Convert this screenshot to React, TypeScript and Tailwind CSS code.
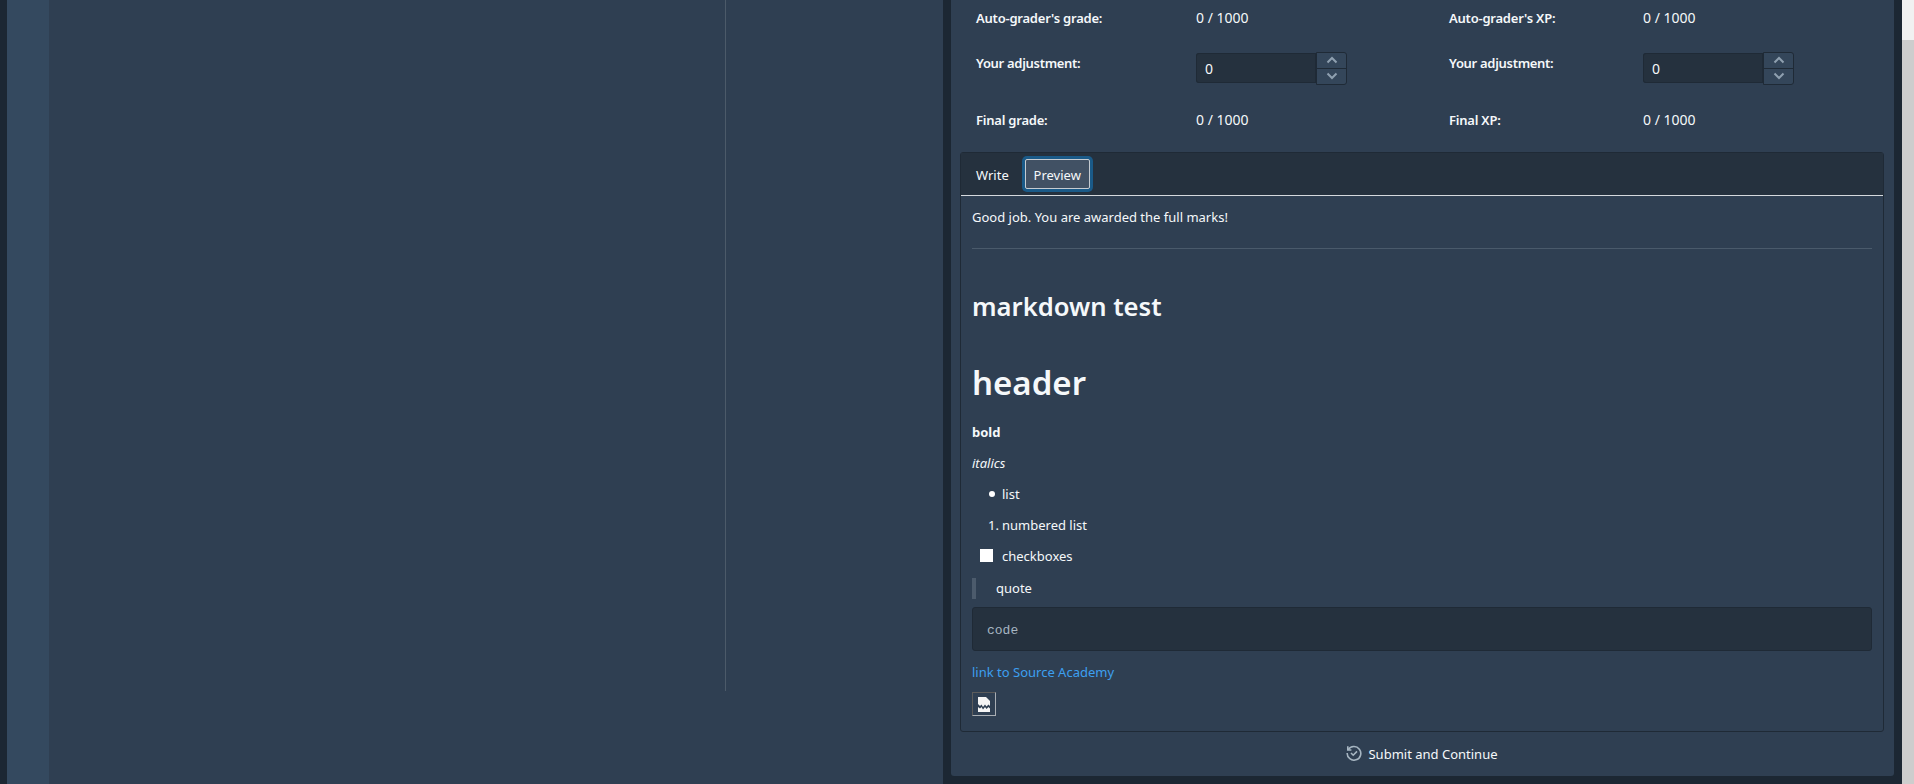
import React from "react";

const font = { fontFamily: '"Noto Sans", "Open Sans", sans-serif' };

function Spin() {
  return (
    <div className="flex h-[30px] items-center">
      <div className="flex h-[30px] w-[120px] items-center rounded-l-[3px] bg-[#25313e] pl-[9px] text-[14px] text-[#f5f8fa] shadow-[inset_0_0_0_1px_#1f2a36]">0</div>
      <div className="flex h-[33px] w-[31px] flex-col rounded-r-[3px] border border-[#1f2a36] bg-[#34465a]">
        <div className="flex flex-1 items-center justify-center border-b border-[#1f2a36]">
          <svg width="12" height="8" viewBox="0 0 12 8" fill="none" stroke="#8fa0b0" strokeWidth="2"><path d="M1.5 6.5 6 2l4.5 4.5" /></svg>
        </div>
        <div className="flex flex-1 items-center justify-center">
          <svg width="12" height="8" viewBox="0 0 12 8" fill="none" stroke="#8fa0b0" strokeWidth="2"><path d="M1.5 1.5 6 6l4.5-4.5" /></svg>
        </div>
      </div>
    </div>
  );
}

export default function App() {
  return (
    <div style={font} className="flex h-[784px] w-[1914px] overflow-hidden bg-[#1c2733] text-[14px] text-[#f5f8fa]">
      <div className="flex h-full w-[943px] shrink-0 pl-[7px]">
        <div className="h-full w-[42px] bg-[#34495f]" />
        <div className="h-full flex-1 bg-[#2f3f52]">
          <div className="h-[691px] w-[677px] border-r border-[#4c5a69]" />
        </div>
      </div>

      <div className="flex h-full flex-1 flex-col pb-[8px] pl-[8px] pr-[8px]">
        <div className="flex h-full flex-col rounded-b-[3px] bg-[#2f3f52] pl-[9px] pr-[10px]">
          <div className="grid h-[152px] shrink-0 grid-cols-[220px_253px_194px_1fr] grid-rows-[38px_66px_34px] pl-[16px] text-[13px]">
            <div className="self-center font-semibold tracking-[-0.22px]">Auto-grader's grade:</div>
            <div className="mt-[-3px] self-center text-[14px]">0 / 1000</div>
            <div className="self-center font-semibold tracking-[-0.22px]">Auto-grader's XP:</div>
            <div className="mt-[-3px] self-center text-[14px]">0 / 1000</div>

            <div className="pt-[16px] font-semibold tracking-[-0.3px]">Your adjustment:</div>
            <div className="pt-[15px]"><Spin /></div>
            <div className="pt-[16px] font-semibold tracking-[-0.3px]">Your adjustment:</div>
            <div className="pt-[15px]"><Spin /></div>

            <div className="self-center font-semibold tracking-[-0.22px]">Final grade:</div>
            <div className="mt-[-3px] self-center text-[14px]">0 / 1000</div>
            <div className="self-center font-semibold tracking-[-0.22px]">Final XP:</div>
            <div className="mt-[-3px] self-center text-[14px]">0 / 1000</div>
          </div>

          <div className="flex h-[580px] shrink-0 flex-col rounded-[3px] border border-[#1f2a36]">
            <div className="flex h-[43px] shrink-0 items-center border-b border-[#d5d9dd] bg-[#25313e] pl-[15px] text-[13px]">
              <span className="pt-[3px]">Write</span>
              <span className="ml-[16px] flex h-[30px] w-[65px] items-center justify-center rounded-[2px] border border-[#c5cbd1] bg-[#415164] pt-[3px] shadow-[0_0_0_3px_#1a5a88]">Preview</span>
            </div>
            <div className="flex flex-1 flex-col px-[11px] text-[13px]">
              <div className="flex h-[52px] shrink-0 items-center"><span className="mt-[-8px]">Good job. You are awarded the full marks!</span></div>
              <div className="h-px shrink-0 bg-[#4a5a6b]" />
              <h2 className="mt-[42px] text-[25.6px] font-semibold leading-[32px]">markdown test</h2>
              <h1 className="mt-[40px] text-[33px] font-semibold leading-[40px]">header</h1>
              <div className="mt-[20px] h-[31px] font-bold leading-[18px]">bold</div>
              <div className="h-[31px] italic leading-[18px]">italics</div>
              <div className="flex h-[31px] items-start leading-[18px]">
                <span className="ml-[17px] mr-[7px] mt-[6px] h-[6px] w-[6px] rounded-full bg-white" />
                <span>list</span>
              </div>
              <div className="flex h-[31px] items-start leading-[18px]">
                <span className="ml-[16px] w-[14px]">1.</span>
                <span>numbered list</span>
              </div>
              <div className="flex h-[31px] items-start leading-[18px]">
                <span className="ml-[8px] mr-[9px] mt-[2px] h-[13px] w-[13px] bg-white" />
                <span>checkboxes</span>
              </div>
              <div className="flex h-[21px] items-center border-l-4 border-[#4c5b6c] pl-[20px]">quote</div>
              <div className="mt-[8px] flex h-[44px] shrink-0 items-center rounded-[3px] border border-[#1f2a36] bg-[#25313e] pl-[14px] pt-[3px] text-[13px] text-[#a7b6c2]" style={{ fontFamily: '"Liberation Mono", monospace' }}>code</div>
              <a className="mt-[12px] h-[18px] leading-[18px] text-[#3d9ff0]">link to Source Academy</a>
              <div className="mt-[11px] flex h-[24px] w-[24px] items-center justify-center border border-b-[#a8adb3] border-l-[#5c5c5c] border-r-[#a8adb3] border-t-[#5c5c5c]">
                <svg width="12" height="15" viewBox="0 0 12 15" fill="#f5f5f5">
                  <path d="M0 0h8l4 4v5l-1.5-1.5L8.5 9.5 7 7.5 5 10 3.5 7.5 2 9 0 7z" />
                  <path d="M0 10l2 1.5L3.5 10 5 12.5 7 10l1.5 2 2-2 1.5 1.5V15H0z" />
                </svg>
              </div>
            </div>
          </div>

          <div className="flex flex-1 items-center justify-center gap-[6px] pt-[1px] text-[13px]">
            <svg className="mb-[3px]" width="16" height="16" viewBox="0 0 16 16" fill="none" stroke="#a7b6c2" strokeWidth="1.6">
              <path d="M2.2 4.8A6.8 6.8 0 1 1 1.2 8" />
              <path d="M1.8 1.2v3.8h3.6" />
              <path d="M5 8l2.2 2.2L11 6.4" />
            </svg>
            <span>Submit and Continue</span>
          </div>
        </div>
      </div>

      <div className="flex h-full w-[12px] shrink-0 flex-col bg-[#f1f1f1]">
        <div className="h-[40px]" />
        <div className="flex-1 bg-[#cdcdcd]" />
      </div>
    </div>
  );
}
